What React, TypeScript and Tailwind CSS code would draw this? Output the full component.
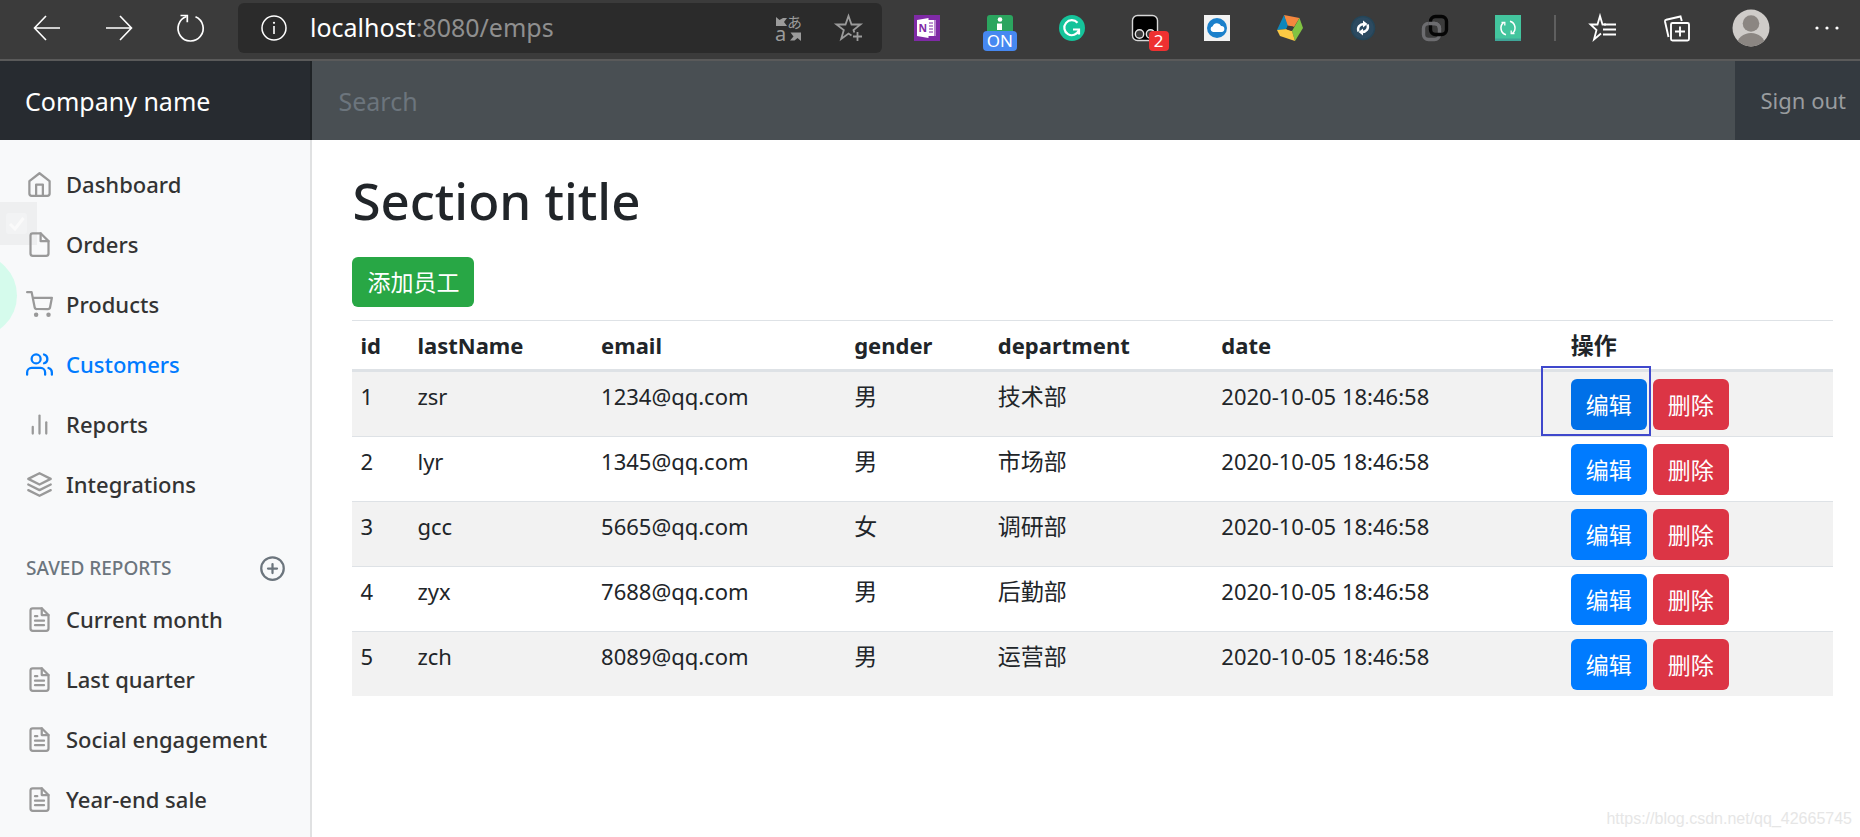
import type { ReactNode } from 'react';
import type { IconType } from 'react-icons';
import {
  FiBarChart2,
  FiFile,
  FiFileText,
  FiHome,
  FiLayers,
  FiPlusCircle,
  FiShoppingCart,
  FiUsers,
} from 'react-icons/fi';

interface Employee {
  id: number;
  lastName: string;
  email: string;
  gender: string;
  department: string;
  date: string;
}

const employees: Employee[] = [
  { id: 1, lastName: 'zsr', email: '1234@qq.com', gender: '男', department: '技术部', date: '2020-10-05 18:46:58' },
  { id: 2, lastName: 'lyr', email: '1345@qq.com', gender: '男', department: '市场部', date: '2020-10-05 18:46:58' },
  { id: 3, lastName: 'gcc', email: '5665@qq.com', gender: '女', department: '调研部', date: '2020-10-05 18:46:58' },
  { id: 4, lastName: 'zyx', email: '7688@qq.com', gender: '男', department: '后勤部', date: '2020-10-05 18:46:58' },
  { id: 5, lastName: 'zch', email: '8089@qq.com', gender: '男', department: '运营部', date: '2020-10-05 18:46:58' },
];

const mainLinks: { label: string; icon: IconType; active?: boolean }[] = [
  { label: 'Dashboard', icon: FiHome },
  { label: 'Orders', icon: FiFile },
  { label: 'Products', icon: FiShoppingCart },
  { label: 'Customers', icon: FiUsers, active: true },
  { label: 'Reports', icon: FiBarChart2 },
  { label: 'Integrations', icon: FiLayers },
];

const savedReports = ['Current month', 'Last quarter', 'Social engagement', 'Year-end sale'];

function ToolButton({ label, className = '', children }: { label: string; className?: string; children: ReactNode }) {
  return (
    <button type="button" aria-label={label} className={`relative flex items-center justify-center ${className}`}>
      {children}
    </button>
  );
}

function Glyph({ size = 28, children }: { size?: number; children: ReactNode }) {
  return (
    <svg width={size} height={size} viewBox="0 0 28 28" fill="none" className="overflow-visible">
      {children}
    </svg>
  );
}

function BrowserBar() {
  return (
    <div className="flex h-[61px] items-center border-b-2 border-[#5a5a5a] bg-[#3b3b3b] pb-1 pl-[11px]">
      <ToolButton label="Back" className="w-[72px]">
        <Glyph>
          <path d="M27 14H2M13 2 1.5 14 13 26" stroke="#fff" strokeWidth="1.6" />
        </Glyph>
      </ToolButton>
      <ToolButton label="Forward" className="w-[72px]">
        <Glyph>
          <path d="M1 14h25M15 2l11.5 12L15 26" stroke="#fff" strokeWidth="1.6" />
        </Glyph>
      </ToolButton>
      <ToolButton label="Refresh" className="w-[72px]">
        <Glyph>
          <path d="M18.5 2.8A12.6 12.6 0 1 1 9.5 2.5" stroke="#fff" strokeWidth="1.7" />
          <path d="M3.5 1.5h6.8v6.8" stroke="#fff" strokeWidth="1.7" />
        </Glyph>
      </ToolButton>

      <div className="ml-[11px] flex h-[50px] min-w-0 flex-1 items-center rounded-md bg-[#2b2b2b] pl-[22px] pr-[19px]">
        <Glyph>
          <circle cx="14" cy="14" r="12" stroke="#fff" strokeWidth="1.5" />
          <path d="M14 12v8" stroke="#fff" strokeWidth="1.6" />
          <circle cx="14" cy="8.8" r="1.1" fill="#fff" />
        </Glyph>
        <div className="ml-[22px] flex-1 text-[25px] leading-[35px] text-[#8f8f8f]">
          <span className="text-white">localhost</span>:8080/emps
        </div>
        <ToolButton label="Translate" className="mr-8">
          <Glyph>
            <path d="M1 3l3.500 3L8 4h4l-3 4 3 4H1z" fill="#9b9b9b" />
            <path d="M26 27l-3.500-3-3 2.500H15l3.500-4-3-4H26z" fill="#9b9b9b" />
            <text x="12" y="14" fontSize="15" fill="#9b9b9b" fontFamily="Noto Sans CJK JP">あ</text>
            <text x="0" y="27" fontSize="20" fill="#9b9b9b" fontFamily="Noto Sans">a</text>
          </Glyph>
        </ToolButton>
        <ToolButton label="Add to favorites">
          <Glyph>
            <path
              d="M16.500 21.500 13.500 19.500 6.200 25l2.600-9L1.500 10.500h9L13.500 2l3 8.500h9l-7 5.500.8 2.500"
              stroke="#9b9b9b"
              strokeWidth="1.8"
            />
            <path d="M22.500 18v9M18 22.500h9" stroke="#9b9b9b" strokeWidth="1.8" />
          </Glyph>
        </ToolButton>
      </div>

      <div className="ml-[9px] grid w-[653px] grid-cols-9">
        <ToolButton label="OneNote">
          <Glyph>
            <path d="M1 1h26v26H1z" fill="#7f2aa6" />
            <path d="M15 6h8v16h-8z" fill="#fff" />
            <path d="M16 9h4M16 12h4M16 15h4M16 18h4M22 6v16" stroke="#7f2aa6" strokeWidth="1.100" />
            <path d="M4 6l11.500-2v20L4 22z" fill="#fff" />
            <text x="5.500" y="18" fontSize="10.500" fontWeight="700" fill="#7f2aa6" fontFamily="Noto Sans">N</text>
          </Glyph>
        </ToolButton>
        <ToolButton label="Extension on">
          <Glyph>
            <rect x="1" y="1" width="26" height="26" rx="3" fill="#2ba55f" />
            <circle cx="14" cy="5.500" r="2.300" fill="#fff" />
            <path d="M11 9.500h5V16h-5z" fill="#fff" />
          </Glyph>
          <span className="absolute top-[17px] rounded-sm bg-[#4688f1] px-1 text-[17px] leading-5 text-white">ON</span>
        </ToolButton>
        <ToolButton label="Grammarly">
          <Glyph>
            <circle cx="14" cy="14" r="13" fill="#15c39a" />
            <path d="M19.500 8.800A7.500 7.500 0 1 0 20.800 16.500" stroke="#fff" strokeWidth="2.200" />
            <path d="M15 15.500h6v5" stroke="#fff" strokeWidth="2.200" />
          </Glyph>
        </ToolButton>
        <ToolButton label="Tampermonkey">
          <Glyph>
            <rect x="1.500" y="1.500" width="25" height="25" rx="5" fill="#000" stroke="#d8d8d8" strokeWidth="1.400" />
            <circle cx="8.500" cy="20" r="4.200" fill="#3b3b3b" stroke="#e6e6e6" strokeWidth="1.400" />
            <circle cx="19.500" cy="20" r="4.200" fill="#3b3b3b" stroke="#e6e6e6" strokeWidth="1.400" />
          </Glyph>
          <span className="absolute left-10 top-[17px] w-5 rounded-sm bg-[#ee3131] text-center text-[17px] leading-5 text-white">
            2
          </span>
        </ToolButton>
        <ToolButton label="Cloud">
          <Glyph>
            <path d="M1 1h26v26H1z" fill="#f2f2f2" />
            <circle cx="14" cy="14" r="10" fill="#1b80cb" />
            <path d="M10 18a3 3 0 0 1-.3-5.800 4.500 4.500 0 0 1 8.400-.3A3 3 0 0 1 18.500 18z" fill="#fff" />
          </Glyph>
        </ToolButton>
        <ToolButton label="Office">
          <Glyph>
            <path d="M8 1l15.500 3L18 13l-7-1z" fill="#f4873e" />
            <path d="M8 1l4 11-2 3-9 1z" fill="#0f86ba" />
            <path d="M23.500 4L27 14l-8 13-3-10z" fill="#80c342" />
            <path d="M1 16l10-1 5 2 3 10-15-5z" fill="#fbc944" />
            <path d="M11.500 11.500l6 1-2 4.500-5-1.500z" fill="#3b3b3b" />
          </Glyph>
        </ToolButton>
        <ToolButton label="Sync">
          <Glyph>
            <circle cx="14" cy="14" r="11.500" fill="#2c4a60" stroke="#244558" strokeWidth="1.500" />
            <path d="M9.500 17.500c-1.500-4 1-7.500 5.500-7.500M18.500 10.500c1.500 4-1 7.500-5.500 7.500" stroke="#fff" strokeWidth="2.400" />
            <path d="M14 6.500l4.500 3.500-4.500 3.500zM14 14.500L9.500 18l4.500 3.500z" fill="#fff" />
          </Glyph>
        </ToolButton>
        <ToolButton label="Links">
          <Glyph>
            <rect x="2.500" y="9.500" width="16" height="16" rx="5" stroke="#6d6d70" strokeWidth="3.400" />
            <rect x="9.500" y="2.500" width="16" height="18" rx="5" stroke="#050505" strokeWidth="3.400" />
            <path d="M7.500 9.500h6a5 5 0 0 1 5 5" stroke="#6d6d70" strokeWidth="3.400" />
          </Glyph>
        </ToolButton>
        <ToolButton label="Reload helper">
          <Glyph>
            <path d="M1 1h26v26H1z" fill="#43c59e" />
            <path d="M1 24.500h26V27H1z" fill="#3fa698" />
            <path d="M12 20.800A7 7 0 0 1 9.500 8.700M16 7.200A7 7 0 0 1 18.500 19.300" stroke="#fff" strokeWidth="1.500" />
            <path d="M7.500 8.300h3.300v3.300M20.500 19.700h-3.300v-3.300" stroke="#fff" strokeWidth="1.300" />
          </Glyph>
        </ToolButton>
      </div>

      <div className="ml-2.5 h-[26px] w-0.5 bg-[#5f5f5f]" />

      <div className="ml-2.5 flex">
        <ToolButton label="Favorites" className="w-[74px]">
          <Glyph>
            <path d="M17 10.500 13.500 10.500 11 2 8.500 10.500H1.500l6 5.500-2.500 9.500 7-6" stroke="#fff" strokeWidth="1.800" />
            <path d="M15 10.500h12M14 15.500h13M14 20.500h13" stroke="#fff" strokeWidth="1.800" />
          </Glyph>
        </ToolButton>
        <ToolButton label="Collections" className="w-[74px]">
          <Glyph>
            <rect x="8" y="9" width="18" height="17.500" rx="1.500" stroke="#fff" strokeWidth="1.900" />
            <path d="M17 12.500v10M12 17.500h10" stroke="#fff" strokeWidth="1.900" />
            <path d="M5.500 23 2 7.500a1.500 1.500 0 0 1 1.200-1.700L17.500 2.500l1.300 4.500" stroke="#fff" strokeWidth="1.900" />
          </Glyph>
        </ToolButton>
        <ToolButton label="Profile" className="w-[74px]">
          <svg width="38" height="38" viewBox="0 0 38 38">
            <clipPath id="avatar">
              <circle cx="19" cy="19" r="18.500" />
            </clipPath>
            <g clipPath="url(#avatar)">
              <path d="M0 0h38v38H0z" fill="#cfccc9" />
              <circle cx="19" cy="14.500" r="8.300" fill="#8b8682" />
              <ellipse cx="19" cy="36" rx="14" ry="12" fill="#8b8682" />
            </g>
          </svg>
        </ToolButton>
        <ToolButton label="Settings and more" className="w-[72px] pl-1.5">
          <Glyph>
            <circle cx="4" cy="14" r="1.600" fill="#fff" />
            <circle cx="14" cy="14" r="1.600" fill="#fff" />
            <circle cx="24" cy="14" r="1.600" fill="#fff" />
          </Glyph>
        </ToolButton>
      </div>
    </div>
  );
}

function Navbar() {
  return (
    <nav className="flex h-[79px] items-stretch bg-[#343a40]">
      <a
        href="#"
        className="flex w-[16.8%] items-center border-r-2 border-[#1f2326] bg-[#272b30] pl-[25px] pt-0.5 text-[25px] text-white"
      >
        Company name
      </a>
      <input
        type="text"
        placeholder="Search"
        aria-label="Search"
        className="min-w-0 flex-1 bg-[#494f53] px-[26px] pt-0.5 text-[25px] text-white outline-none placeholder:text-[#6c757d]"
      />
      <a href="#" className="flex items-center bg-[#343a40] pl-[26px] pr-3.5 text-[22px] text-[#999c9f]">
        Sign out
      </a>
    </nav>
  );
}

function SideLink({ label, icon: Icon, active }: { label: string; icon: IconType; active?: boolean }) {
  return (
    <li>
      <a
        href="#"
        className={`flex h-[60px] items-center gap-[13px] pl-[26px] text-[22px] font-medium ${
          active ? 'text-[#007bff]' : 'text-[#333]'
        }`}
      >
        <Icon size={27} className={active ? '' : 'text-[#999]'} />
        {label}
      </a>
    </li>
  );
}

function Sidebar() {
  return (
    <aside className="relative w-[16.8%] overflow-hidden border-r-2 border-[#e0e1e2] bg-[#f8f9fa] pt-3.5">
      {/* floating widgets peeking in from the window edge */}
      <div className="absolute left-0 top-[62px] flex h-[43px] w-[37px] items-center bg-[#eeeff0] pl-1.5">
        <svg width="21" height="21" viewBox="0 0 21 21" fill="none">
          <rect width="21" height="21" rx="3" fill="#f2f3f4" />
          <path d="M4 11l5 5 8.500-11" stroke="#fafafa" strokeWidth="3" />
        </svg>
      </div>
      <div className="absolute -left-[66px] top-[114px] h-[83px] w-[83px] rounded-full bg-[#d5fbec]" />

      <ul className="relative">
        {mainLinks.map((link) => (
          <SideLink key={link.label} {...link} />
        ))}
      </ul>
      <h6 className="mt-[33px] flex h-[42px] items-center justify-between pl-[26px] pr-6 text-[19px] font-medium text-[#6c757d]">
        SAVED REPORTS
        <button type="button" aria-label="Add report">
          <FiPlusCircle size={27} />
        </button>
      </h6>
      <ul>
        {savedReports.map((label) => (
          <SideLink key={label} label={label} icon={FiFileText} />
        ))}
      </ul>
    </aside>
  );
}

function EmployeeTable() {
  const head = 'border-t border-b-3 border-t-[#dee2e6] border-b-[#dee2e6] px-2 pt-[7px] pb-1.5';
  const text = 'px-2 pt-[7px] pb-1.5 align-top';
  return (
    <table className="mt-[13px] w-full table-fixed border-separate border-spacing-0 text-left text-[22px] leading-[35px]">
      <colgroup>
        <col className="w-[3.85%]" />
        <col className="w-[12.4%]" />
        <col className="w-[17.1%]" />
        <col className="w-[9.7%]" />
        <col className="w-[15.1%]" />
        <col className="w-[23.6%]" />
        <col />
      </colgroup>
      <thead>
        <tr>
          <th className={head}>id</th>
          <th className={head}>lastName</th>
          <th className={head}>email</th>
          <th className={head}>gender</th>
          <th className={head}>department</th>
          <th className={head}>date</th>
          <th className={`${head} text-[23px]`}>操作</th>
        </tr>
      </thead>
      <tbody>
        {employees.map((emp) => (
          <tr
            key={emp.id}
            className="odd:bg-[#f2f2f2] [&:not(:first-child)>td]:border-t [&:not(:first-child)>td]:border-[#dee2e6]"
          >
            <td className={text}>{emp.id}</td>
            <td className={text}>{emp.lastName}</td>
            <td className={text}>{emp.email}</td>
            <td className={`${text} text-[23px]`}>{emp.gender}</td>
            <td className={`${text} text-[23px]`}>{emp.department}</td>
            <td className={text}>{emp.date}</td>
            <td className="relative px-2 pt-[7px] pb-1.5">
              <div className="flex gap-1.5">
                <button
                  type="button"
                  className={`rounded-md px-[15px] pt-[9px] pb-[7px] text-[23px] text-white ${
                    emp.id === 1 ? 'bg-[#0070e8]' : 'bg-[#007bff]'
                  }`}
                >
                  编辑
                </button>
                <button
                  type="button"
                  className="rounded-md bg-[#dc3545] px-[15px] pt-[9px] pb-[7px] text-[23px] text-white"
                >
                  删除
                </button>
              </div>
              {emp.id === 1 && (
                <div className="absolute -left-[22px] -top-1.5 h-[70px] w-[110px] border-2 border-[#3f48cc]" />
              )}
            </td>
          </tr>
        ))}
      </tbody>
    </table>
  );
}

export default function App() {
  return (
    <div className="relative flex min-h-screen flex-col bg-white font-['Noto_Sans','Noto_Sans_CJK_SC',sans-serif] text-[#212529]">
      <BrowserBar />
      <Navbar />
      <div className="flex flex-1">
        <Sidebar />
        <main className="flex-1 pl-10 pr-[27px] pt-7">
          <h2 className="mb-[25px] text-[51px] leading-[64px] font-medium">Section title</h2>
          <button type="button" className="block h-[50px] rounded-md bg-[#28a745] px-[15px] text-[23px] text-white">
            添加员工
          </button>
          <EmployeeTable />
        </main>
      </div>
      <span className="absolute bottom-2 right-2 font-['Liberation_Sans',sans-serif] text-[16px] leading-5 text-[#e6e6e6]">
        https://blog.csdn.net/qq_42665745
      </span>
    </div>
  );
}
